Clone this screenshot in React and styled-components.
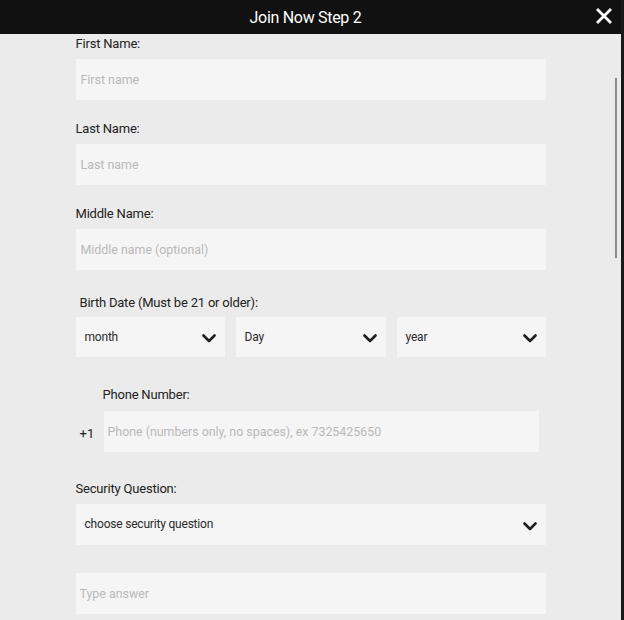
import React from "react";
import styled, { createGlobalStyle } from "styled-components";

const Global = createGlobalStyle`
  html, body { margin: 0; padding: 0; background: #ebebeb; }
  body { font-family: Roboto, "Liberation Sans", sans-serif; }
  * { box-sizing: border-box; }
`;

const Modal = styled.div`
  position: relative;
  width: 624px;
  height: 620px;
  overflow: hidden;
  background: #ebebeb;
  border-right: 3px solid #1a1a1a;
  display: flex;
  flex-direction: column;
`;

const Header = styled.header`
  height: 34px;
  flex: none;
  background: #111;
  display: flex;
  align-items: center;
  justify-content: center;
  padding-right: 10px;
  position: relative;
`;

const Title = styled.h1`
  margin: 0;
  color: #fff;
  font-size: 16px;
  font-weight: 400;
  letter-spacing: -0.3px;
`;

const Close = styled.button`
  position: absolute;
  right: 6px;
  top: 5px;
  width: 22px;
  height: 22px;
  padding: 0;
  border: 0;
  background: transparent;
  display: flex;
  align-items: center;
  justify-content: center;
  cursor: pointer;
`;

const Body = styled.div`
  flex: 1;
  display: flex;
  justify-content: center;
  padding-top: 2px;
`;

const Form = styled.form`
  width: 470px;
  display: flex;
  flex-direction: column;
`;

const Group = styled.div`
  display: flex;
  flex-direction: column;
  margin-top: ${(p) => p.$mt || 0}px;
`;

const Label = styled.label`
  font-size: 13px;
  line-height: 16px;
  color: #222;
  letter-spacing: -0.2px;
  padding-left: ${(p) => p.$indent || 0}px;
  margin-bottom: ${(p) => p.$mb || 7}px;
`;

const Input = styled.input`
  height: 41px;
  width: 100%;
  border: 0;
  outline: none;
  background: #f5f5f5;
  padding: 0 0 0 ${(p) => p.$pl || 5}px;
  font-family: inherit;
  font-size: 12.4px;
  color: #333;
  &::placeholder { color: #b9b9b9; }
`;

const SelectRow = styled.div`
  display: grid;
  grid-template-columns: 149px 150px 149px;
  column-gap: 11px;
`;

const Select = styled.div`
  height: ${(p) => p.$h || 40}px;
  background: #f5f5f5;
  display: flex;
  align-items: center;
  justify-content: space-between;
  padding: 0 9px 0 9px;
  font-size: 12px;
  color: #2a2a2a;
  letter-spacing: -0.2px;
`;

const SelectText = styled.span`
  margin-top: -1px;
`;

const PhoneRow = styled.div`
  display: flex;
  align-items: center;
  padding-left: 4px;
  width: 463px;
`;

const Prefix = styled.span`
  font-size: 13px;
  color: #222;
  width: 24px;
  flex: none;
  padding-top: 4px;
`;

const Scroll = styled.div`
  position: absolute;
  right: 4px;
  top: 78px;
  width: 2px;
  height: 180px;
  background: #8c8c8c;
`;

const Chevron = () => (
  <svg width="14" height="9" viewBox="0 0 14 9" style={{ marginTop: 3 }}>
    <path d="M1.5 1.5 L7 7 L12.5 1.5" fill="none" stroke="#1e1e1e" strokeWidth="2.6" strokeLinecap="round" strokeLinejoin="round" />
  </svg>
);

export default function App() {
  return (
    <>
      <Global />
      <Modal>
        <Header>
          <Title>Join Now Step 2</Title>
          <Close aria-label="close">
            <svg width="16" height="16" viewBox="0 0 16 16">
              <path d="M2 2 L14 14 M14 2 L2 14" stroke="#fff" strokeWidth="2.8" strokeLinecap="square" />
            </svg>
          </Close>
        </Header>
        <Body>
          <Form>
            <Group>
              <Label>First Name:</Label>
              <Input placeholder="First name" />
            </Group>
            <Group $mt={21}>
              <Label>Last Name:</Label>
              <Input placeholder="Last name" />
            </Group>
            <Group $mt={21}>
              <Label>Middle Name:</Label>
              <Input placeholder="Middle name (optional)" />
            </Group>
            <Group $mt={25}>
              <Label $indent={4} $mb={6}>Birth Date (Must be 21 or older):</Label>
              <SelectRow>
                <Select><SelectText>month</SelectText><Chevron /></Select>
                <Select><SelectText>Day</SelectText><Chevron /></Select>
                <Select><SelectText>year</SelectText><Chevron /></Select>
              </SelectRow>
            </Group>
            <Group $mt={30}>
              <Label $indent={27} $mb={8}>Phone Number:</Label>
              <PhoneRow>
                <Prefix>+1</Prefix>
                <Input $pl={4} placeholder="Phone (numbers only, no spaces), ex 7325425650" />
              </PhoneRow>
            </Group>
            <Group $mt={29}>
              <Label $mb={7}>Security Question:</Label>
              <Select $h={41}><SelectText>choose security question</SelectText><Chevron /></Select>
            </Group>
            <Group $mt={28}>
              <Input $pl={4} placeholder="Type answer" />
            </Group>
          </Form>
        </Body>
        <Scroll />
      </Modal>
    </>
  );
}
